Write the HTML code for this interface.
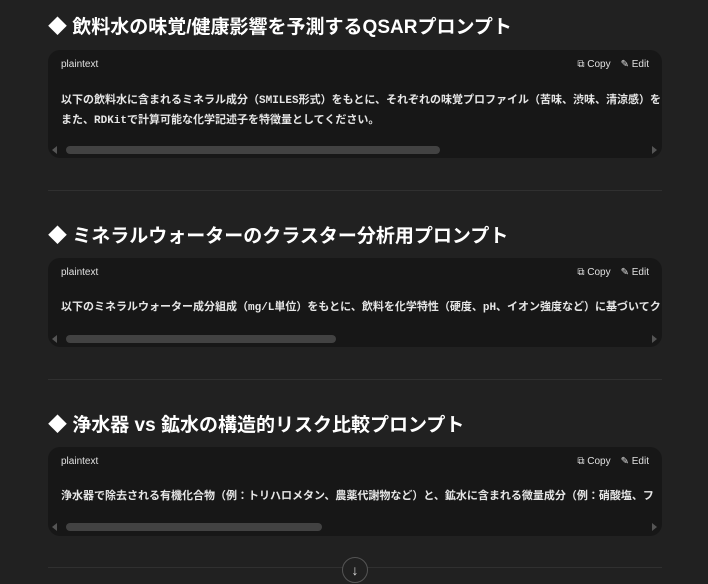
<!DOCTYPE html>
<html><head><meta charset="utf-8"><style>
body{margin:0;background:#212121;width:708px;height:584px;overflow:hidden;font-family:"Liberation Sans","Noto Sans CJK JP",sans-serif;color:#ececec;position:relative}
h2{position:absolute;left:48px;margin:0;font-size:19px;font-weight:bold;color:#fff;line-height:24px;white-space:nowrap}
.blk{position:absolute;left:48px;width:614px;background:#171717;border-radius:12px;overflow:hidden}
.hd{position:absolute;left:13px;top:9px;font-size:10px;color:#e0e0e0}
.ac{position:absolute;right:13px;top:9px;font-size:10px;color:#e0e0e0;white-space:nowrap}
.ac span{margin-left:10px}
.tx{position:absolute;left:13px;font-size:11px;font-family:"Liberation Mono","Noto Sans CJK JP",monospace;font-weight:bold;color:#e6e6e6;white-space:nowrap;line-height:20px}
.sb{position:absolute;left:18px;height:8px;border-radius:4px;background:#424242}
.la,.ra{position:absolute;width:0;height:0;border-top:4px solid transparent;border-bottom:4px solid transparent}
.la{left:4px;border-right:5px solid #555}.ra{right:5px;border-left:5px solid #555}
.sep{position:absolute;left:48px;width:614px;height:1px;background:#303030}
</style></head><body>
<h2 style="top:16px">◆ 飲料水の味覚/健康影響を予測するQSARプロンプト</h2>
<div class="blk" style="top:50px;height:108px">
<div class="hd">plaintext</div><div class="ac"><span>⧉ Copy</span><span>✎ Edit</span></div>
<div class="tx" style="top:41px">以下の飲料水に含まれるミネラル成分（SMILES形式）をもとに、それぞれの味覚プロファイル（苦味、渋味、清涼感）を<br>また、RDKitで計算可能な化学記述子を特徴量としてください。</div>
<div class="sb" style="top:96px;width:374px"></div><div class="la" style="top:96px"></div><div class="ra" style="top:96px"></div>
</div>
<div class="sep" style="top:190px"></div>
<h2 style="top:225px">◆ ミネラルウォーターのクラスター分析用プロンプト</h2>
<div class="blk" style="top:258px;height:89px">
<div class="hd">plaintext</div><div class="ac"><span>⧉ Copy</span><span>✎ Edit</span></div>
<div class="tx" style="top:40px">以下のミネラルウォーター成分組成（mg/L単位）をもとに、飲料を化学特性（硬度、pH、イオン強度など）に基づいてク</div>
<div class="sb" style="top:77px;width:270px"></div><div class="la" style="top:77px"></div><div class="ra" style="top:77px"></div>
</div>
<div class="sep" style="top:379px"></div>
<h2 style="top:414px">◆ 浄水器 vs 鉱水の構造的リスク比較プロンプト</h2>
<div class="blk" style="top:447px;height:89px">
<div class="hd">plaintext</div><div class="ac"><span>⧉ Copy</span><span>✎ Edit</span></div>
<div class="tx" style="top:40px">浄水器で除去される有機化合物（例：トリハロメタン、農薬代謝物など）と、鉱水に含まれる微量成分（例：硝酸塩、フ</div>
<div class="sb" style="top:76px;width:256px"></div><div class="la" style="top:76px"></div><div class="ra" style="top:76px"></div>
</div>
<div class="sep" style="top:567px"></div>
<div style="position:absolute;left:342px;top:557px;width:24px;height:24px;border-radius:50%;border:1px solid #555;background:#212121;color:#ddd;font-size:14px;text-align:center;line-height:24px">↓</div>
</body></html>
